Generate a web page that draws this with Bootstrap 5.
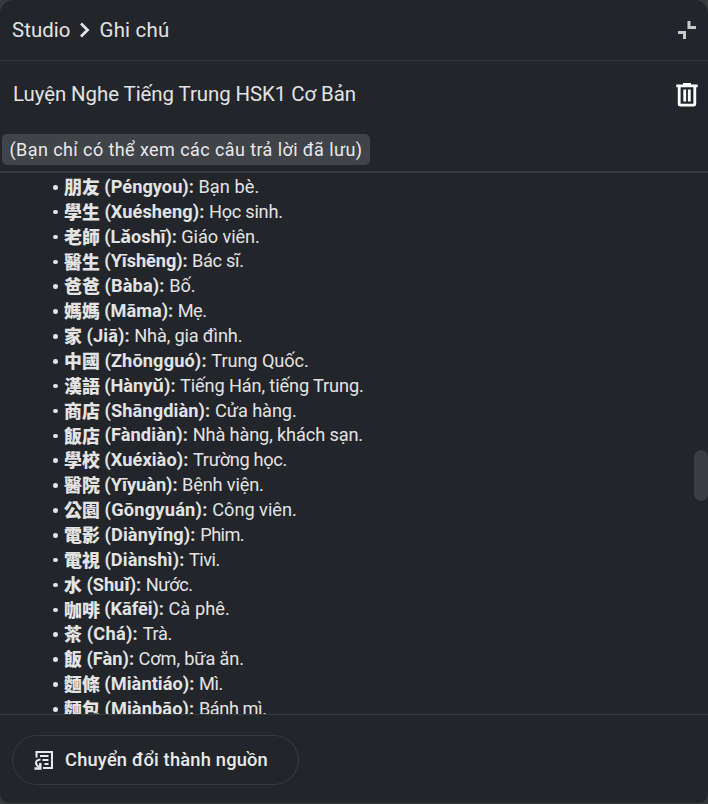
<!DOCTYPE html>
<html lang="vi">
<head>
<meta charset="utf-8">
<meta name="viewport" content="width=device-width, initial-scale=1">
<title>Studio – Ghi chú</title>
<link href="https://cdn.jsdelivr.net/npm/bootstrap@5.3.0/dist/css/bootstrap.min.css" rel="stylesheet">
<style>
body{background:#37383b;font-family:Roboto,"Noto Sans","Noto Sans CJK TC",sans-serif;color:#e3e3e3;height:804px}
.studio{background:#22262b;height:803px;border-radius:14px 14px 9px 9px;line-height:1}
.studio svg{display:block;flex:none}
.fit{display:inline-block;white-space:pre;flex:none}
.crumbs{height:61px;border-bottom:1px solid #37393c;padding:0 11px 0 12px;font-size:20.4px}
.crumbs svg.chev{margin:0 9px 0 8px}
.title-row{height:73px;padding:0 10px 6px 13px;font-size:20.4px}
.notice{height:31px;width:368px;margin:0 0 6px 2px;padding-left:7.5px;background:#404347;border-radius:5px;font-size:18px;color:#e8eaed}
.words{height:543px;border-top:2px solid #37393c;padding-top:1.8px;font-size:18.2px}
.words ul{padding-left:53px}
.words li{height:24.86px;line-height:24.86px;white-space:pre}
.dot{width:4.6px;height:4.6px;border-radius:50%;background:#e3e3e3;margin-right:6.4px;flex:none}
.han{font-family:"Noto Sans CJK TC",sans-serif;font-weight:900;font-size:17.9px;flex:none;line-height:24px;padding-bottom:2.6px}
.pin{font-weight:700}
.thumb{width:14px;height:51px;border-radius:7px;background:#3b3e42;right:0;top:450px}
.foot{height:89px;border-top:1px solid #37393c;padding:20px 12px}
.convert{width:287px;height:50px;border:1px solid #373b3e;border-radius:25px;padding:0 0 0 21px;color:#e8eaed;font-size:18.3px;font-weight:500;line-height:1;background:none}
.convert .fit{margin-left:11px}
</style>
<script src="https://cdn.jsdelivr.net/npm/bootstrap@5.3.0/dist/js/bootstrap.bundle.min.js"></script>
</head>
<body class="overflow-hidden">
<main class="studio d-flex flex-column overflow-hidden position-relative">
  <header class="crumbs d-flex align-items-center flex-shrink-0">
    <span class="fit" data-w="58.5">Studio</span>
    <svg class="chev" width="12" height="16" viewBox="0 0 12 16" fill="none" stroke="#e3e3e3" stroke-width="2.8"><path d="M2 1.500 8.500 8 2 14.500"/></svg>
    <span class="fit" data-w="70">Ghi chú</span>
    <svg class="ms-auto" width="20" height="20" viewBox="0 0 20 20" fill="none" stroke="#c9cac8" stroke-width="3"><path d="M12 1v6.500h7M1 12.500h6.500V19"/></svg>
  </header>
  <div class="title-row d-flex align-items-center justify-content-between flex-shrink-0">
    <span class="fit" data-w="343">Luyện Nghe Tiếng Trung HSK1 Cơ Bản</span>
    <svg width="22" height="24" viewBox="0 0 22 24" fill="none" stroke="#fff" stroke-width="2.800"><path d="M.300 2.900h21.400M7 1.400h8M3.200 3v18.200q0 1 1 1h13.600q1 0 1-1V3M8.700 6.500v12M13.300 6.500v12"/></svg>
  </div>
  <div class="notice d-flex align-items-center flex-shrink-0"><span class="fit" data-w="353">(Bạn chỉ có thể xem các câu trả lời đã lưu)</span></div>
  <section class="words overflow-hidden flex-shrink-0">
    <ul class="list-unstyled m-0" id="words"></ul>
  </section>
  <div class="thumb position-absolute"></div>
  <footer class="foot flex-shrink-0">
    <button class="convert btn d-flex align-items-center" type="button">
      <svg width="20" height="20" viewBox="0 0 20 20" fill="none" stroke="#e8eaed" stroke-width="2"><path d="M2.500 7.500V2H18v16H9M6 6h8.500M8.500 10h6M10.500 14h4M6.500 9.500Q2 10 2 13q0 2.200 3 4"/><path d="M.500 18.500h5.800v-5.500" stroke-width="2.400"/></svg>
      <span class="fit" data-w="203">Chuyển đổi thành nguồn</span>
    </button>
  </footer>
</main>
<script>
// han, pinyin, meaning, meaning start x, meaning end x
const words = [
 ["朋友","Péngyou","Bạn bè.",199.5,258.3],
 ["學生","Xuésheng","Học sinh.",210,281.7],
 ["老師","Lǎoshī","Giáo viên.",182.3,258.7],
 ["醫生","Yīshēng","Bác sĩ.",193,242.7],
 ["爸爸","Bàba","Bố.",170.3,194.3],
 ["媽媽","Māma","Mẹ.",178.7,205.7],
 ["家","Jiā","Nhà, gia đình.",135.3,241.3],
 ["中國","Zhōngguó","Trung Quốc.",212.3,307.7],
 ["漢語","Hànyǔ","Tiếng Hán, tiếng Trung.",181,362.7],
 ["商店","Shāngdiàn","Cửa hàng.",216,295.7],
 ["飯店","Fàndiàn","Nhà hàng, khách sạn.",193.7,362],
 ["學校","Xuéxiào","Trường học.",194,286],
 ["醫院","Yīyuàn","Bệnh viện.",183,262.7],
 ["公園","Gōngyuán","Công viên.",213.3,295.7],
 ["電影","Diànyǐng","Phim.",201.3,243],
 ["電視","Diànshì","Tivi.",190,218.7],
 ["水","Shuǐ","Nước.",146.7,191.7],
 ["咖啡","Kāfēi","Cà phê.",169.4,229],
 ["茶","Chá","Trà.",143.7,171],
 ["飯","Fàn","Cơm, bữa ăn.",139.6,243],
 ["麵條","Miàntiáo","Mì.",200,222],
 ["麵包","Miànbāo","Bánh mì.",200,265.5]
];
document.getElementById("words").innerHTML = words.map(([h,p,m,s,e]) => {
  const left = 64 + h.length * 17.9;
  return `<li class="d-flex align-items-center"><i class="dot"></i><b class="han">${h}</b><b class="fit pin" data-w="${s-1-left}"> (${p}): </b><span class="fit" data-w="${e-s+2}">${m}</span></li>`;
}).join("");
// Track each label to its set width
document.querySelectorAll(".fit").forEach(el => {
  const want = +el.dataset.w, have = el.getBoundingClientRect().width;
  el.style.letterSpacing = (want - have) / el.textContent.length + "px";
});
</script>
</body>
</html>
